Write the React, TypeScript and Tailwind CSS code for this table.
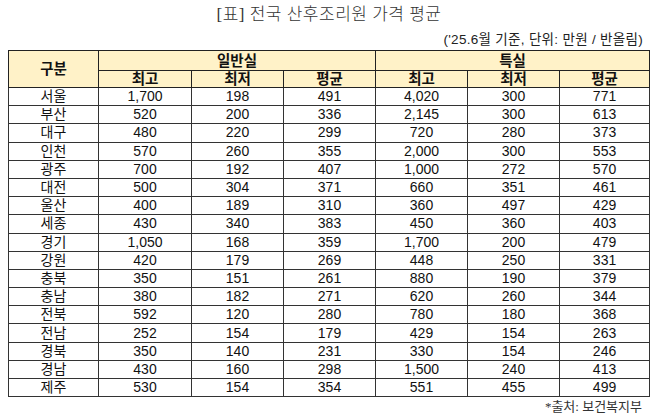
import React from 'react';

const rows: [string, string, string, string, string, string, string][] = [
  ['서울', '1,700', '198', '491', '4,020', '300', '771'],
  ['부산', '520', '200', '336', '2,145', '300', '613'],
  ['대구', '480', '220', '299', '720', '280', '373'],
  ['인천', '570', '260', '355', '2,000', '300', '553'],
  ['광주', '700', '192', '407', '1,000', '272', '570'],
  ['대전', '500', '304', '371', '660', '351', '461'],
  ['울산', '400', '189', '310', '360', '497', '429'],
  ['세종', '430', '340', '383', '450', '360', '403'],
  ['경기', '1,050', '168', '359', '1,700', '200', '479'],
  ['강원', '420', '179', '269', '448', '250', '331'],
  ['충북', '350', '151', '261', '880', '190', '379'],
  ['충남', '380', '182', '271', '620', '260', '344'],
  ['전북', '592', '120', '280', '780', '180', '368'],
  ['전남', '252', '154', '179', '429', '154', '263'],
  ['경북', '350', '140', '231', '330', '154', '246'],
  ['경남', '430', '160', '298', '1,500', '240', '413'],
  ['제주', '530', '154', '354', '551', '455', '499'],
];

const sans = "font-['Liberation_Sans','Noto_Sans_CJK_KR',sans-serif]";
const serif = "font-['Liberation_Serif','Noto_Sans_CJK_KR',serif]";

function App() {
  return (
    <div className="w-[658px] h-[417px] bg-white text-[#111] overflow-hidden">
      <div className={`${serif} h-[31px] pt-[5px] text-center text-[17px] leading-[20px] font-light text-[#333] tracking-[0.5px]`}>
        [표] 전국 산후조리원 가격 평균
      </div>
      <div className={`${sans} h-[19px] pr-[15px] text-right text-[13.5px] leading-[18px] tracking-[0.3px] text-[#222]`}>
        ('25.6월 기준, 단위: 만원 / 반올림)
      </div>
      <table className={`${sans} ml-[8px] w-[641px] table-fixed border-collapse border border-[#222] text-[14px] text-center`}>
        <colgroup>
          <col className="w-[90px]" />
          <col className="w-[93px]" />
          <col className="w-[92px]" />
          <col className="w-[92px]" />
          <col className="w-[92px]" />
          <col className="w-[92px]" />
          <col className="w-[90px]" />
        </colgroup>
        <thead className="bg-[#fff2c8] font-bold">
          <tr className="h-[20px]">
            <th rowSpan={2} className="border border-[#222] font-bold p-0 leading-[18px] text-[14.5px]">구분</th>
            <th colSpan={3} className="border border-[#222] font-bold p-0 leading-[18px] text-[14.5px]">일반실</th>
            <th colSpan={3} className="border border-[#222] font-bold p-0 leading-[18px] text-[14.5px]">특실</th>
          </tr>
          <tr className="h-[17px]">
            {['최고', '최저', '평균', '최고', '최저', '평균'].map((h, i) => (
              <th key={i} className="border border-[#222] font-bold p-0 leading-[16px] text-[14.5px]">{h}</th>
            ))}
          </tr>
        </thead>
        <tbody>
          {rows.map((r) => (
            <tr key={r[0]} className="h-[18.2px]">
              {r.map((c, i) => (
                <td key={i} className="border border-[#333] p-0 leading-[17px]">{c}</td>
              ))}
            </tr>
          ))}
        </tbody>
      </table>
      <div className={`${serif} pr-[16px] pt-[1px] text-right text-[13px] leading-[18px] text-[#333]`}>
        *출처: 보건복지부
      </div>
    </div>
  );
}

export default App;
